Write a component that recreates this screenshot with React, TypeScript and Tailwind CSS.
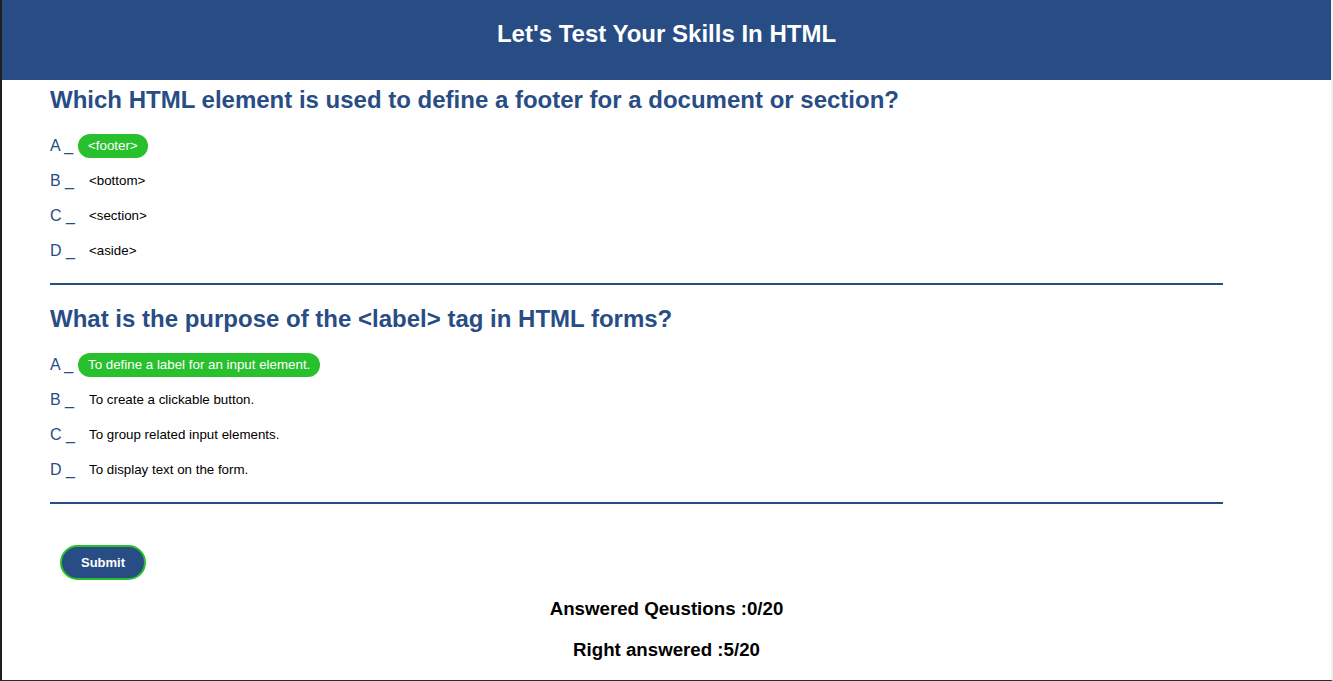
import { useState } from "react";

interface Question {
  title: string;
  options: string[];
  picked: number;
}

const questions: Question[] = [
  {
    title: "Which HTML element is used to define a footer for a document or section?",
    options: ["<footer>", "<bottom>", "<section>", "<aside>"],
    picked: 0,
  },
  {
    title: "What is the purpose of the <label> tag in HTML forms?",
    options: [
      "To define a label for an input element.",
      "To create a clickable button.",
      "To group related input elements.",
      "To display text on the form.",
    ],
    picked: 0,
  },
];

const letters = ["A", "B", "C", "D"];

export default function App() {
  const [answers, setAnswers] = useState<number[]>(questions.map((q) => q.picked));

  return (
    <div className="h-[681px] overflow-hidden border-r-2 border-b border-l-2 border-r-[#f0f0f0] border-b-[#2b2b2b] border-l-[#1e1e1e] bg-white font-['Liberation_Sans',Arial,sans-serif]">
      {/* Header */}
      <header className="flex h-20 items-center justify-center bg-[#284d85]">
        <h1 className="pb-3 text-[24px] font-bold text-white">Let's Test Your Skills In HTML</h1>
      </header>

      <main className="pl-12 pr-[108px]">
        {questions.map((q, qi) => (
          <section key={qi} className="border-b-2 border-[#284d85] pt-5 pb-5 first:pt-[6px]">
            <h2 className="text-[24px] leading-[28px] font-bold text-[#284d85]">{q.title}</h2>
            <div className="mt-5 flex flex-col gap-[11px]">
              {q.options.map((opt, oi) => (
                <div key={oi} className="flex h-6 items-center text-[#284d85]">
                  <span className="w-7 text-base">{letters[oi]} _</span>
                  <button
                    onClick={() => setAnswers((a) => a.map((v, i) => (i === qi ? oi : v)))}
                    className={
                      answers[qi] === oi
                        ? "h-6 rounded-full bg-[#29c02d] px-[10px] text-[13.33px] text-white"
                        : "h-6 rounded-full px-[10px] pl-[11px] text-[13.33px] text-black"
                    }
                  >
                    {opt}
                  </button>
                </div>
              ))}
            </div>
          </section>
        ))}

        <div className="pt-[41px] pl-[10px]">
          <button className="h-[35px] w-[86px] rounded-full border-2 border-[#29c02d] bg-[#284d85] text-[13px] font-bold text-white">
            Submit
          </button>
        </div>
      </main>

      {/* Results */}
      <div className="flex flex-col items-center gap-[19px] pt-[18px] text-[18.7px] leading-[22px] font-bold text-black">
        <p>Answered Qeustions :0/20</p>
        <p>Right answered :5/20</p>
      </div>
    </div>
  );
}
